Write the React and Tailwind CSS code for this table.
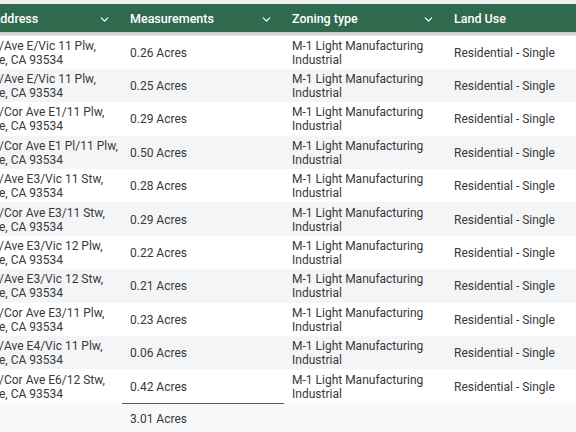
import { ChevronDown } from "lucide-react"

const rows = [
  ["/Ave E/Vic 11 Plw,", "0.26 Acres"],
  ["/Ave E/Vic 11 Plw,", "0.25 Acres"],
  ["/Cor Ave E1/11 Plw,", "0.29 Acres"],
  ["/Cor Ave E1 Pl/11 Plw,", "0.50 Acres"],
  ["/Ave E3/Vic 11 Stw,", "0.28 Acres"],
  ["/Cor Ave E3/11 Stw,", "0.29 Acres"],
  ["/Ave E3/Vic 12 Plw,", "0.22 Acres"],
  ["/Ave E3/Vic 12 Stw,", "0.21 Acres"],
  ["/Cor Ave E3/11 Plw,", "0.23 Acres"],
  ["/Ave E4/Vic 11 Plw,", "0.06 Acres"],
  ["/Cor Ave E6/12 Stw,", "0.42 Acres"],
]

const cols = "grid grid-cols-[122px_162px_162px_162px]"

function HeaderCell({ label, chevron = true, first = false }) {
  return (
    <div className={`flex items-center justify-between pt-[2px] pr-[11px] ${first ? "-ml-[8px]" : "pl-2"}`}>
      <span>{label}</span>
      {chevron && <ChevronDown className="h-[13px] w-[13px]" strokeWidth={2.25} />}
    </div>
  )
}

export default function App() {
  return (
    <div
      className="w-[576px] h-[432px] overflow-hidden bg-[#f8f9fa] text-[12px] leading-[14px] text-[#383838]"
      style={{ fontFamily: "Roboto, 'Liberation Sans', sans-serif" }}
    >
      <div className="h-[4px] bg-[#f0f0f0]" />
      <div className={`${cols} h-[28px] bg-[#2f6a4f] text-white font-medium text-[12.5px]`}>
        <HeaderCell label="Address" first />
        <HeaderCell label="Measurements" />
        <HeaderCell label="Zoning type" />
        <HeaderCell label="Land Use" chevron={false} />
      </div>
      <div className="h-[3.5px] bg-gradient-to-b from-[#c9c9c9] to-[#e4e4e4]" />

      {rows.map(([addr, size], i) => (
        <div
          key={i}
          className={`${cols} h-[33.4px] items-center pt-[1px] ${i % 2 === 0 ? "bg-white" : "bg-[#f4f5f6]"}`}
        >
          <div className="-ml-[1px] whitespace-nowrap">
            <div>{addr}</div>
            <div>e, CA 93534</div>
          </div>
          <div className="px-2">{size}</div>
          <div className="px-2">
            <div>M-1 Light Manufacturing</div>
            <div>Industrial</div>
          </div>
          <div className="px-2">Residential - Single</div>
        </div>
      ))}

      <div className={cols}>
        <div />
        <div className="border-t-[1.5px] border-[#5a5a5a] px-2 pt-[8px]">3.01 Acres</div>
      </div>
    </div>
  )
}
